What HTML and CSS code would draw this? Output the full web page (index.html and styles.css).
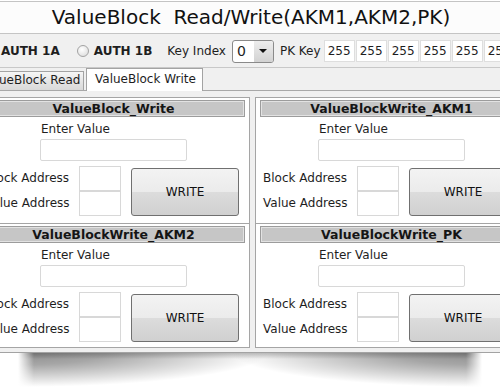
FILE: index.html
```html
<!DOCTYPE html>
<html lang="en">
<head>
	<meta charset="UTF-8">
	<title>ValueBlock Read/Write</title>
	<link rel="stylesheet" href="styles.css">
</head>
<body>
	<div class="window">
		<div class="title">ValueBlock  Read/Write(AKM1,AKM2,PK)</div>
		<div class="auth">
			<label class="radio"><span class="dot"></span>AUTH 1A</label>
			<label class="radio r2"><span class="dot"></span>AUTH 1B</label>
			<span class="key-label">Key Index</span>
			<div class="select"><span class="val">0</span><span class="arrow"></span></div>
			<span class="pk-label">PK Key</span>
			<div class="pk-box">
				<span>255</span>
				<span>255</span>
				<span>255</span>
				<span>255</span>
				<span>255</span>
				<span>255</span>
				<span>255</span>
			</div>
		</div>
		<div class="tabs">
			<span class="tab">ValueBlock Read</span>
			<span class="tab current">ValueBlock Write</span>
		</div>
		<div class="page">
			<div class="column">
				<div class="section">
					<div class="head">ValueBlock_Write</div>
					<div class="value">
						<p>Enter Value</p>
						<div class="input-wide"></div>
					</div>
					<div class="row">
						<div class="labels"><p>Block Address</p><p>Value Address</p></div>
						<div class="boxes"><div class="input-small"></div><div class="input-small"></div></div>
						<button class="btn">WRITE</button>
					</div>
				</div>
				<div class="section">
					<div class="head">ValueBlockWrite_AKM2</div>
					<div class="value">
						<p>Enter Value</p>
						<div class="input-wide"></div>
					</div>
					<div class="row">
						<div class="labels"><p>Block Address</p><p>Value Address</p></div>
						<div class="boxes"><div class="input-small"></div><div class="input-small"></div></div>
						<button class="btn">WRITE</button>
					</div>
				</div>
			</div>
			<div class="column">
				<div class="section">
					<div class="head">ValueBlockWrite_AKM1</div>
					<div class="value">
						<p>Enter Value</p>
						<div class="input-wide"></div>
					</div>
					<div class="row">
						<div class="labels"><p>Block Address</p><p>Value Address</p></div>
						<div class="boxes"><div class="input-small"></div><div class="input-small"></div></div>
						<button class="btn">WRITE</button>
					</div>
				</div>
				<div class="section">
					<div class="head">ValueBlockWrite_PK</div>
					<div class="value">
						<p>Enter Value</p>
						<div class="input-wide"></div>
					</div>
					<div class="row">
						<div class="labels"><p>Block Address</p><p>Value Address</p></div>
						<div class="boxes"><div class="input-small"></div><div class="input-small"></div></div>
						<button class="btn">WRITE</button>
					</div>
				</div>
			</div>
		</div>
	</div>
	<div class="shadow"></div>
</body>
</html>
```

FILE: styles.css
```css
*{
	padding: 0;
	margin: 0;
	box-sizing: border-box;
}
body{
	width: 500px;
	height: 387px;
	overflow: hidden;
	background: #fff;
	font: 12px "DejaVu Sans", Verdana, sans-serif;
	color: #1e1e1e;
}
.window{
	width: 560px;
	margin: 1px 0 0 -23px;
	border-top: 1px solid #c4c4c4;
	background: #f0f0f0;
}
.title{
	height: 32px;
	padding-right: 12px;
	border-bottom: 1px solid #c4c4c4;
	background: #fcfcfc;
	font-size: 20px;
	line-height: 31px;
	text-align: center;
	white-space: pre;
	color: #111;
}
/* auth row */
.auth{
	height: 34px;
	padding: 1px 0 0 7px;
	border-bottom: 1px solid #c8c8c8;
	display: flex;
	align-items: center;
	white-space: nowrap;
}
.auth > *{
	flex-shrink: 0;
}
.radio{
	display: flex;
	align-items: center;
	font-weight: bold;
}
.dot{
	width: 12px;
	height: 12px;
	margin-right: 5px;
	border: 1px solid #a3a3a3;
	border-radius: 50%;
	background: radial-gradient(circle at 40% 35%, #fff, #d8d8d8);
}
.r2{
	margin-left: 17px;
}
.key-label{
	margin-left: 15px;
}
.select{
	width: 42px;
	height: 23px;
	margin-left: 6px;
	border: 1px solid #8a8a8a;
	border-radius: 3px;
	background: #fff;
	display: flex;
	overflow: hidden;
}
.select .val{
	flex: 1;
	padding-left: 4px;
	font-size: 14px;
	line-height: 21px;
}
.select .arrow{
	width: 19px;
	background: linear-gradient(#ededed, #d2d2d2);
	display: flex;
	align-items: center;
	justify-content: center;
}
.select .arrow::after{
	content: "";
	border-left: 4px solid transparent;
	border-right: 4px solid transparent;
	border-top: 4px solid #111;
}
.pk-label{
	margin-left: 6px;
}
.pk-box{
	margin-left: 3px;
	display: flex;
	gap: 1px;
}
.pk-box span{
	width: 31px;
	height: 22px;
	border: 1px solid #dedede;
	background: #fff;
	text-align: center;
	line-height: 20px;
}
/* tabs */
.tabs{
	height: 23px;
	margin-left: -3px;
	border-bottom: 1px solid #a8a8a8;
	display: flex;
	align-items: flex-end;
}
.tab{
	width: 110px;
	height: 19px;
	padding: 0 6px;
	border: 1px solid #a3a3a3;
	border-bottom: none;
	background: linear-gradient(#f6f6f6, #e3e3e3 60%, #d9d9d9);
	line-height: 17px;
	white-space: nowrap;
}
.tab.current{
	width: 117px;
	height: 23px;
	margin: 0 0 -1px 2px;
	padding: 0 8px;
	background: #fff;
	line-height: 21px;
}
/* tab page */
.page{
	padding: 6px 0 4px;
	border-bottom: 1px solid #a3a3a3;
	display: flex;
	gap: 5px;
}
.column{
	width: 273px;
	border: 1px solid #a5a5a5;
	background: #fff;
}
.section{
	height: 123px;
}
.section + .section{
	height: 124px;
	border-top: 1px solid #a5a5a5;
}
.head{
	height: 17px;
	margin: 2px 4px 0;
	border: 1px solid #9c9c9c;
	box-shadow: inset 0 0 0 1px #e2e2e2;
	background: #c6c6c6;
	text-align: center;
	font-weight: bold;
	font-size: 12.5px;
	line-height: 15px;
	color: #151515;
}
.value{
	padding-left: 62px;
}
.value p{
	margin-top: 5px;
	padding-left: 1px;
	line-height: 14px;
}
.input-wide{
	width: 147px;
	height: 22px;
	margin-top: 3px;
	border: 1px solid #d8d8d8;
	border-radius: 2px;
	background: #fff;
}
.row{
	margin-top: 5px;
	padding-left: 7px;
	display: flex;
}
.labels{
	width: 94px;
}
.labels p{
	height: 25px;
	line-height: 25px;
	white-space: nowrap;
}
.input-small{
	width: 42px;
	height: 25px;
	border: 1px solid #d8d8d8;
	background: #fff;
}
.btn{
	width: 108px;
	height: 48px;
	margin: 2px 0 0 10px;
	border: 1px solid #707070;
	border-radius: 3px;
	background: linear-gradient(#f3f3f3, #ebebeb 50%, #dcdcdc 51%, #d0d0d0);
	font: inherit;
	color: #111;
}
/* shadow under the window */
.shadow{
	height: 36px;
	padding: 0 18px;
	background:
		linear-gradient(to right, #fff, rgba(255,255,255,0) 16px, rgba(255,255,255,0) calc(100% - 16px), #fff),
		radial-gradient(ellipse 250px 34px at 0 0, rgba(0,0,0,.45), rgba(0,0,0,.35) 35%, rgba(0,0,0,0)),
		radial-gradient(ellipse 250px 34px at 100% 0, rgba(0,0,0,.45), rgba(0,0,0,.35) 35%, rgba(0,0,0,0)),
		linear-gradient(#c8c8c8, #fff 6px);
	background-clip: content-box;
	background-origin: content-box;
}
```
